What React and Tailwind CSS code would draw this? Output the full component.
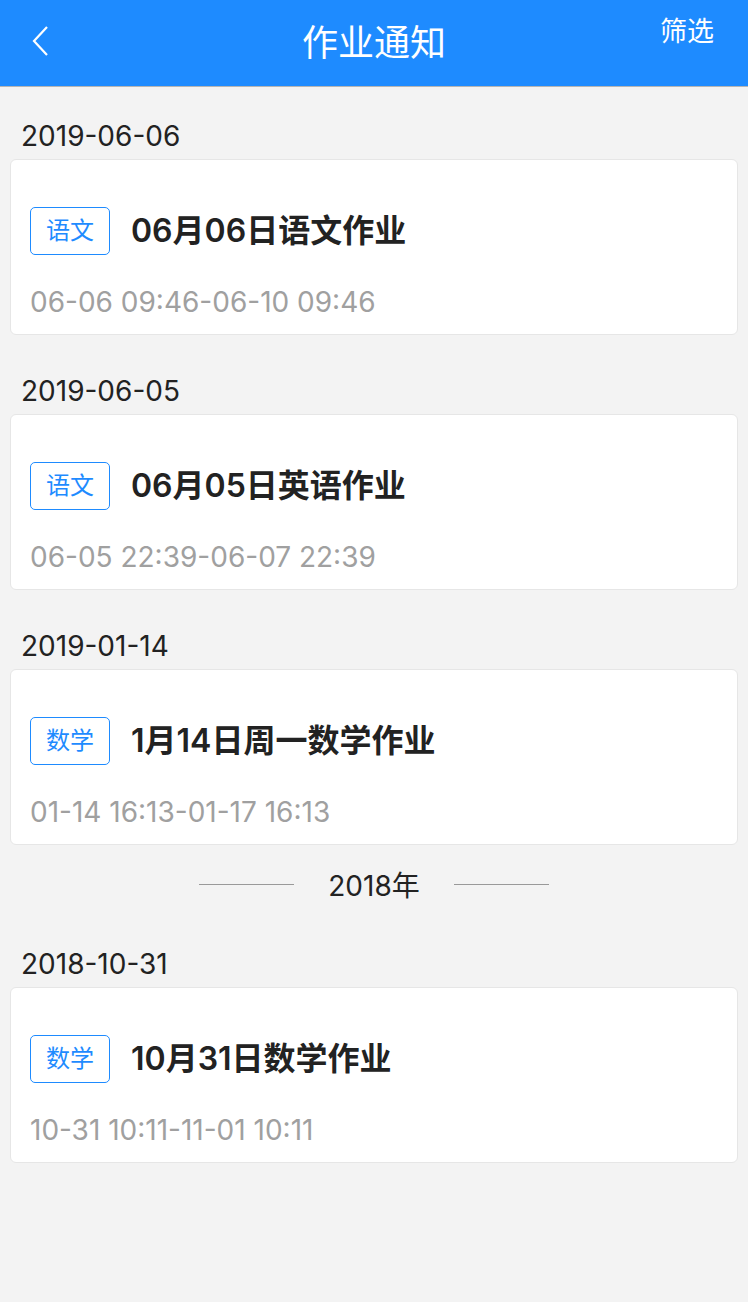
const sections = [
  { date: '2019-06-06', tag: '语文', title: '06月06日语文作业', time: '06-06 09:46-06-10 09:46' },
  { date: '2019-06-05', tag: '语文', title: '06月05日英语作业', time: '06-05 22:39-06-07 22:39' },
  { date: '2019-01-14', tag: '数学', title: '1月14日周一数学作业', time: '01-14 16:13-01-17 16:13' },
  { year: '2018年' },
  { date: '2018-10-31', tag: '数学', title: '10月31日数学作业', time: '10-31 10:11-11-01 10:11' },
];

const font = { fontFamily: 'Inter, "Noto Sans CJK SC", sans-serif' };

function Card({ item }) {
  return (
    <div className="mx-[10px] rounded-[6px] border border-[#e6e6e6] bg-white px-[19px] pt-[47px] pb-[16px]">
      <div className="flex h-[48px] items-center">
        <div className="flex h-[48px] w-[80px] items-center justify-center rounded-[5px] border border-[#1e8bff] text-[24px] text-[#1e8bff]">
          {item.tag}
        </div>
        <div className="ml-[21px] text-[32px] font-semibold text-[#222]">{item.title}</div>
      </div>
      <div className="mt-[31px] h-[32px] text-[28px] leading-[32px] text-[#a0a0a0]">{item.time}</div>
    </div>
  );
}

export default function App() {
  return (
    <div className="min-h-[1302px] bg-[#f3f3f3]" style={font}>
      <div className="relative flex h-[87px] items-center justify-center border-b border-[#b5b5b5] bg-[#1e8bff]">
        <svg className="absolute left-[30px] top-[25px]" width="20" height="32" viewBox="0 0 20 32">
          <path d="M17 2 L4 16 L17 30" fill="none" stroke="white" strokeWidth="2.2" />
        </svg>
        <div className="text-[36px] text-white">作业通知</div>
        <div className="absolute right-[34px] top-[12px] text-[27px] text-white">筛选</div>
      </div>

      <div className="pt-[26px]">
        {sections.map((s, i) =>
          s.year ? (
            <div key={i} className="mt-[17px] flex h-[48px] items-center justify-center">
              <div className="mt-[-4px] h-px w-[95px] bg-[#999]" />
              <div className="mx-[34px] text-[28px] text-[#222]">{s.year}</div>
              <div className="mt-[-4px] h-px w-[95px] bg-[#999]" />
            </div>
          ) : (
            <div key={i} className={i === 0 ? '' : s.date === '2018-10-31' ? 'mt-[31px]' : 'mt-[33px]'}>
              <div className="flex h-[46px] items-center px-[21px] text-[28px] text-[#222]">{s.date}</div>
              <Card item={s} />
            </div>
          )
        )}
      </div>
    </div>
  );
}
